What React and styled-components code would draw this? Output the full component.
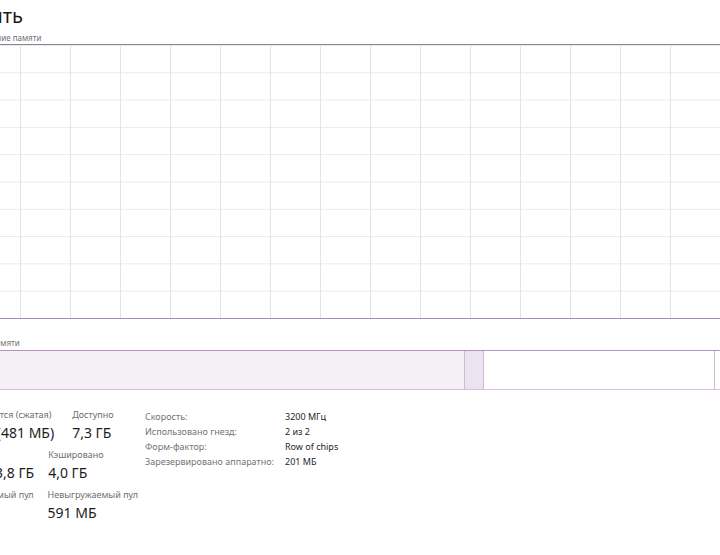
import React from "react";
import styled, { createGlobalStyle } from "styled-components";

const Global = createGlobalStyle`
  html, body { margin: 0; padding: 0; background: #ffffff; }
  body { font-family: "Noto Sans", "Open Sans", sans-serif; overflow: hidden; }
`;

const Page = styled.div`
  width: 720px;
  height: 555px;
  overflow: hidden;
  background: #fff;
`;

const Inner = styled.div`
  margin-left: -46px;
  width: 830px;
  padding-top: 2px;
`;

const Title = styled.h1`
  margin: 0 0 0 -4px;
  font-size: 20px;
  font-weight: 400;
  color: #1b1b1b;
  line-height: 28px;
  height: 30px;
`;

const SmallLabel = styled.div`
  margin-left: -4px;
  font-size: 8px;
  color: #6f6f6f;
  line-height: 11px;
  height: ${(p) => p.$h || 12}px;
`;

const Graph = styled.div`
  height: 273px;
  border: 1px solid #a88db2;
  border-top-color: #94809b;
  background-color: #fff;
  background-image:
    linear-gradient(to right, #e4e4e4 1px, transparent 1px),
    linear-gradient(to bottom, #eaeaea 1px, transparent 1px);
  background-size: 50px 100%, 100% 10%;
  background-position: 15px 0, 0 0;
`;

const Gap = styled.div`
  height: ${(p) => p.$h}px;
`;

const Bar = styled.div`
  display: flex;
  height: 38px;
  border-top: 1px solid #b394bd;
  border-bottom: 1px solid #dcbde4;
`;

const Segment = styled.div`
  flex: 0 0 ${(p) => p.$w}px;
  background: ${(p) => p.$fill};
  border-right: 1px solid #c9c0cc;
`;

const Stats = styled.div`
  display: flex;
  margin-top: 18px;
`;

const Left = styled.div`
  flex: 0 0 191px;
  display: flex;
  flex-direction: column;
  gap: 4px;
`;

const StatRow = styled.div`
  display: flex;
  gap: ${(p) => p.$gap || 16}px;
`;

const Stat = styled.div`
  display: flex;
  flex-direction: column;
`;

const StatLabel = styled.div`
  font-size: 9px;
  line-height: 14px;
  color: #6e6e6e;
  white-space: nowrap;
`;

const StatValue = styled.div`
  font-size: 14px;
  line-height: 22px;
  color: #1c1c1c;
  white-space: nowrap;
`;

const Specs = styled.div`
  display: grid;
  grid-template-columns: 140px auto;
  grid-auto-rows: 15px;
  align-content: start;
  padding-top: 1px;
`;

const SpecLabel = styled.div`
  font-size: 9px;
  color: #747474;
  line-height: 15px;
  white-space: nowrap;
`;

const SpecValue = styled.div`
  font-size: 9px;
  color: #262626;
  line-height: 15px;
  white-space: nowrap;
`;

const rows = [
  {
    gap: 18,
    items: [
      ["Используется (сжатая)", "2,5 ГБ (481 МБ)"],
      ["Доступно", "7,3 ГБ"],
    ],
  },
  {
    gap: 14,
    items: [
      ["Выделено", "10,4/13,8 ГБ"],
      ["Кэшировано", "4,0 ГБ"],
    ],
  },
  {
    gap: 14,
    items: [
      ["Выгружаемый пул", "96 МБ"],
      ["Невыгружаемый пул", "591 МБ"],
    ],
  },
];

const specs = [
  ["Скорость:", "3200 МГц"],
  ["Использовано гнезд:", "2 из 2"],
  ["Форм-фактор:", "Row of chips"],
  ["Зарезервировано аппаратно:", "201 МБ"],
];

export default function App() {
  return (
    <Page>
      <Global />
      <Inner>
        <Title>Память</Title>
        <SmallLabel $h={12}>Использование памяти</SmallLabel>
        <Graph />
        <Gap $h={18} />
        <SmallLabel $h={13}>Структура памяти</SmallLabel>
        <Bar>
          <Segment $w={510} $fill="#f4f0f6" />
          <Segment $w={18} $fill="#ece3f0" />
          <Segment $w={230} $fill="#ffffff" />
          <Segment $w={80} $fill="#ffffff" />
        </Bar>
        <Stats>
          <Left>
            {rows.map((r, i) => (
              <StatRow key={i} $gap={r.gap}>
                {r.items.map(([l, v]) => (
                  <Stat key={l}>
                    <StatLabel>{l}</StatLabel>
                    <StatValue>{v}</StatValue>
                  </Stat>
                ))}
              </StatRow>
            ))}
          </Left>
          <Specs>
            {specs.map(([l, v]) => (
              <React.Fragment key={l}>
                <SpecLabel>{l}</SpecLabel>
                <SpecValue>{v}</SpecValue>
              </React.Fragment>
            ))}
          </Specs>
        </Stats>
      </Inner>
    </Page>
  );
}
